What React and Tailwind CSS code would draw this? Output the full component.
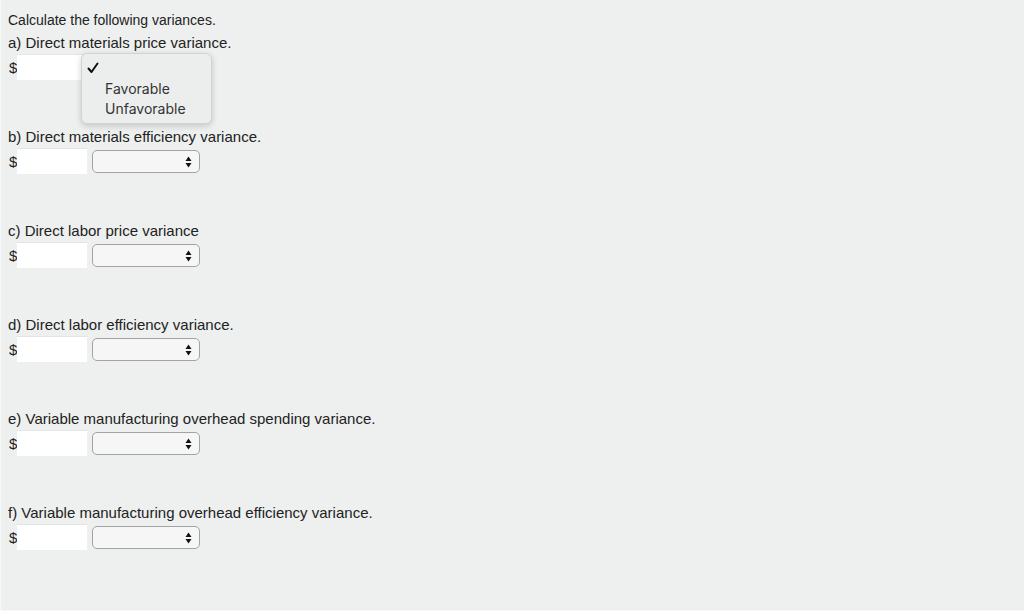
import React from 'react';

const questions = [
  'a) Direct materials price variance.',
  'b) Direct materials efficiency variance.',
  'c) Direct labor price variance',
  'd) Direct labor efficiency variance.',
  'e) Variable manufacturing overhead spending variance.',
  'f) Variable manufacturing overhead efficiency variance.',
];

function SelectBox() {
  return (
    <div className="w-[108px] h-[23px] ml-[5px] mt-[1px] rounded-[5px] border border-[#a3a3a3] bg-[#f6f6f6] flex items-center justify-end pr-[7px]">
      <svg width="7" height="12" viewBox="0 0 7 12">
        <path d="M3.5 0.5 L6.5 5 L0.5 5 Z" fill="#111" />
        <path d="M3.5 11.5 L6.5 7 L0.5 7 Z" fill="#111" />
      </svg>
    </div>
  );
}

function App() {
  return (
    <div
      className="w-[1024px] h-[611px] bg-[#eef0ef] border-l border-b border-[#f7f8f7] text-[#222] text-[14px] pl-[7px] pt-[9px] relative"
      style={{ fontFamily: '"Liberation Sans", Arial, sans-serif' }}
    >
      <div className="h-[22px] leading-[22px]">Calculate the following variances.</div>
      {questions.map((q, i) => (
        <div key={i} className="h-[94px]">
          <div className="h-[22px] leading-[24px] text-[15px]">{q}</div>
          <div className="h-[26px] mt-[1px] flex items-center text-[15px]">
            <span className="w-[9px] pl-[1px] pt-[2px]">$</span>
            <div className="w-[70px] h-[26px] bg-white border-t border-[#e4e4e4]"></div>
            <SelectBox />
          </div>
        </div>
      ))}

      <div
        className="absolute left-[80px] top-[53px] w-[131px] h-[71px] rounded-[6px] bg-[#eceeed] border border-[#d2d3d2] shadow-[0_2px_6px_rgba(0,0,0,0.18)] text-[14px] text-[#333]"
        style={{ fontFamily: 'Inter, "Open Sans", sans-serif' }}
      >
        <div className="h-[20px] flex items-end pl-[5px]">
          <svg width="12" height="12" viewBox="0 0 12 12">
            <path d="M1.5 6.5 L4.5 10 L10.5 1.5" stroke="#111" strokeWidth="2" fill="none" strokeLinecap="round" strokeLinejoin="round" />
          </svg>
        </div>
        <div className="pl-[23px] mt-[5px] h-[20px] leading-[20px]">Favorable</div>
        <div className="pl-[23px] h-[20px] leading-[20px]">Unfavorable</div>
      </div>
    </div>
  );
}

export default App;
